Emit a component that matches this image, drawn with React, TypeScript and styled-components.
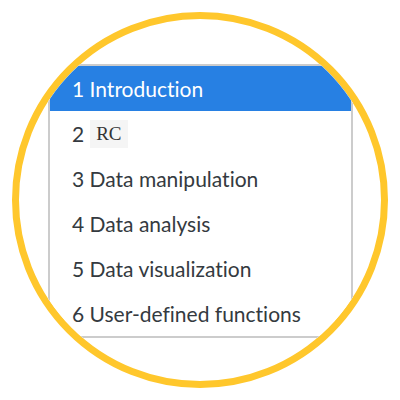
import React from "react";
import styled, { createGlobalStyle } from "styled-components";

const Global = createGlobalStyle`
  html, body { margin: 0; padding: 0; background: #ffffff; }
  body { width: 400px; height: 400px; overflow: hidden; }
`;

const Ring = styled.div`
  box-sizing: border-box;
  width: 376px;
  height: 376px;
  margin: 12px;
  border: 7px solid #ffc72c;
  border-radius: 50%;
  overflow: hidden;
  background: #ffffff;
  padding: 45px 0 0 29px;
`;

const Panel = styled.ul`
  box-sizing: border-box;
  list-style: none;
  margin: 0;
  padding: 0;
  width: 305px;
  border: 2px solid #cccccc;
  background: #ffffff;
`;

const Item = styled.li<{ $active?: boolean }>`
  display: flex;
  align-items: center;
  gap: 6px;
  height: 45px;
  padding-left: 22px;
  box-sizing: border-box;
  font-family: "Lato", "Noto Sans", sans-serif;
  font-size: 21px;
  font-variant-ligatures: none;
  color: ${(p) => (p.$active ? "#ffffff" : "#343a40")};
  background: ${(p) => (p.$active ? "#2780e3" : "transparent")};
  white-space: nowrap;
`;

const Code = styled.code`
  display: inline-flex;
  align-items: center;
  height: 28px;
  font-family: "Liberation Serif", "DejaVu Serif", serif;
  font-size: 19px;
  color: #333333;
  background: #f5f5f5;
  padding: 0 6px;
  margin-top: 1px;
`;

export default function App() {
  return (
    <>
      <Global />
      <Ring>
        <Panel>
          <Item $active>1 Introduction</Item>
          <Item>
            2 <Code>RC</Code>
          </Item>
          <Item>3 Data manipulation</Item>
          <Item>4 Data analysis</Item>
          <Item>5 Data visualization</Item>
          <Item>6 User-defined functions</Item>
        </Panel>
      </Ring>
    </>
  );
}
